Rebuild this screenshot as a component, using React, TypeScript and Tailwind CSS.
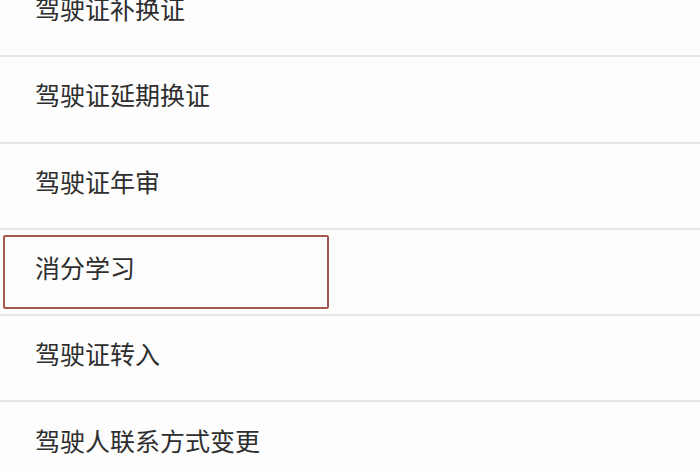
const items = [
  "驾驶证补换证",
  "驾驶证延期换证",
  "驾驶证年审",
  "消分学习",
  "驾驶证转入",
  "驾驶人联系方式变更",
];

export default function App() {
  return (
    <div
      className="w-[700px] h-[470px] overflow-hidden bg-[#fdfdfd]"
      style={{ fontFamily: '"Noto Sans CJK SC", "Noto Sans", sans-serif' }}
    >
      <div className="-mt-[29px]">
        {items.map((label, i) => (
          <div
            key={label}
            className="relative h-[86.3px] border-b-2 border-[#e6e6e6] flex items-center pl-[35px] pb-[9px]"
          >
            {i === 3 && (
              <div className="absolute left-[3px] top-[5px] w-[326px] h-[74px] border-2 border-[#a5584e] rounded-[2px]" />
            )}
            <span className="text-[25px] leading-none text-[#2e2e2e]">{label}</span>
          </div>
        ))}
      </div>
    </div>
  );
}
